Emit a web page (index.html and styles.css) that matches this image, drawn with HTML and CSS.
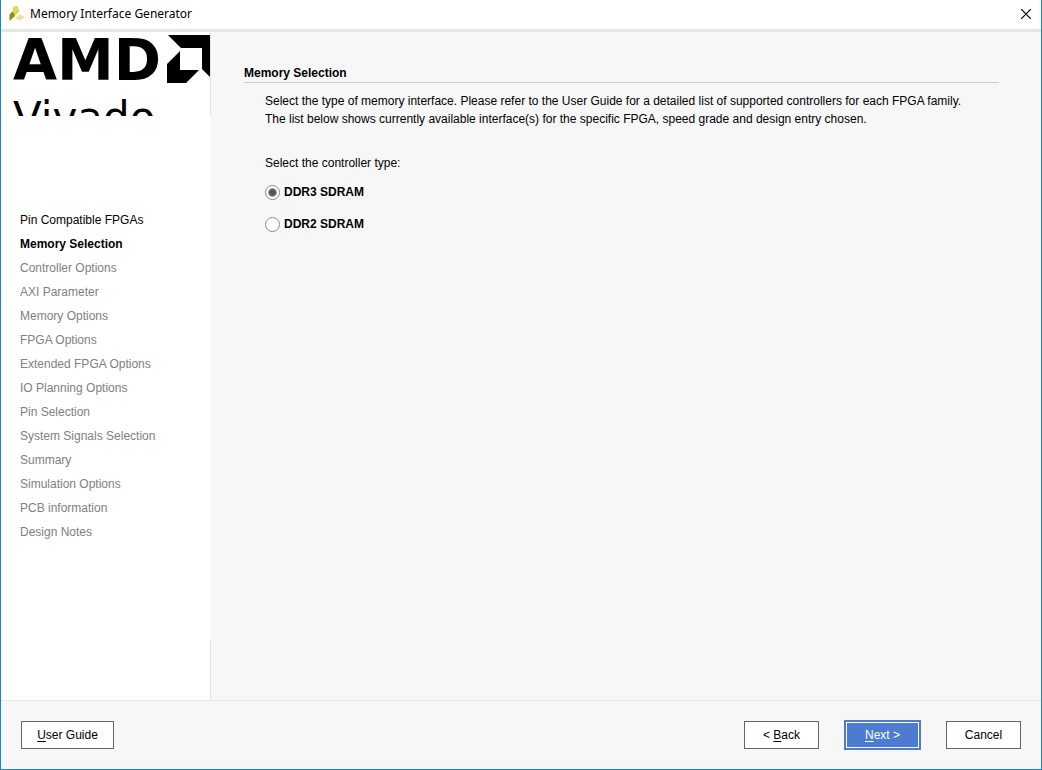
FILE: index.html
```html
<!DOCTYPE html>
<html lang="en">
<head>
    <meta charset="UTF-8">
    <meta name="viewport" content="width=device-width, initial-scale=1.0">
    <title>Memory Interface Generator</title>
    <link rel="stylesheet" href="styles.css">
</head>
<body>
    <div class="window">
        <header class="titlebar">
            <svg class="app-icon" width="16" height="16" viewBox="0 0 16 16" aria-hidden="true">
                <path d="M4 0.5 L8.5 0 L10.5 5.5 L6 9.5 L4 5 Z" fill="#dcdc50"/>
                <path d="M0.5 8.5 L4 5 L6 10 L0.5 15 Z" fill="#8f8f14"/>
                <path d="M6 12 L11 8.5 L16 11 L11 14.5 Z" fill="#e6e696"/>
            </svg>
            <span class="title">Memory Interface Generator</span>
            <button type="button" class="close" aria-label="Close">
                <svg width="10" height="10" viewBox="0 0 10 10">
                    <path d="M0 0 L10 10 M10 0 L0 10" stroke="#000" stroke-width="1.2"/>
                </svg>
            </button>
        </header>

        <div class="content">
            <aside class="sidebar">
                <div class="logo">
                    <div class="brand">
                        <span class="brand-name">AMD</span>
                        <svg width="43" height="48" viewBox="0 0 43 48" aria-hidden="true">
                            <path d="M1 0 H43 V42 L35 34 V13 H14 Z"/>
                            <path d="M0 29 L13 16 V35 H32 L19 48 H0 Z"/>
                        </svg>
                    </div>
                    <div class="product">Vivado</div>
                </div>
                <nav>
                    <ul class="steps">
                        <li class="done">Pin Compatible FPGAs</li>
                        <li class="current">Memory Selection</li>
                        <li>Controller Options</li>
                        <li>AXI Parameter</li>
                        <li>Memory Options</li>
                        <li>FPGA Options</li>
                        <li>Extended FPGA Options</li>
                        <li>IO Planning Options</li>
                        <li>Pin Selection</li>
                        <li>System Signals Selection</li>
                        <li>Summary</li>
                        <li>Simulation Options</li>
                        <li>PCB information</li>
                        <li>Design Notes</li>
                    </ul>
                </nav>
                <div class="sidebar-end"></div>
            </aside>

            <main class="page">
                <h1>Memory Selection</h1>
                <div class="page-body">
                    <p>Select the type of memory interface. Please refer to the User Guide for a detailed list of supported controllers for each FPGA family.<br>
                    The list below shows currently available interface(s) for the specific FPGA, speed grade and design entry chosen.</p>
                    <fieldset>
                        <legend>Select the controller type:</legend>
                        <label><input type="radio" name="controller" value="ddr3" checked>DDR3 SDRAM</label>
                        <label><input type="radio" name="controller" value="ddr2">DDR2 SDRAM</label>
                    </fieldset>
                </div>
            </main>
        </div>

        <footer class="buttons">
            <button type="button" class="btn guide"><u>U</u>ser Guide</button>
            <button type="button" class="btn">&lt; <u>B</u>ack</button>
            <button type="button" class="btn next"><u>N</u>ext &gt;</button>
            <button type="button" class="btn">Cancel</button>
        </footer>
    </div>
</body>
</html>
```

FILE: styles.css
```css
* {
    box-sizing: border-box;
}
body {
    margin: 0;
    font-family: "Liberation Sans", Arial, sans-serif;
    font-size: 12px;
    line-height: 18px;
    color: #000;
}
.window {
    display: flex;
    flex-direction: column;
    min-height: 100vh;
    border: 1px solid #1c82d4;
    border-top: 0;
    background: #f7f7f7;
}

/* title bar */
.titlebar {
    display: flex;
    align-items: center;
    gap: 5px;
    height: 32px;
    padding: 0 10px 2px 8px;
    background: #fff;
    border-bottom: 3px solid #e6e6e6;
}
.title {
    flex: 1;
    font-family: "Noto Sans", sans-serif;
    font-size: 12px;
}
.close {
    display: flex;
    padding: 0;
    border: 0;
    background: none;
}

/* left column */
.content {
    display: flex;
    flex: 1;
}
.sidebar {
    display: flex;
    flex-direction: column;
    width: 210px;
    background: #fff;
}
.logo {
    height: 84px;
    padding: 3px 0 0 12px;
    border-right: 1px solid #e6e6e6;
    overflow: hidden;
}
.brand {
    display: flex;
    justify-content: space-between;
    height: 48px;
}
.brand-name {
    font-family: "DejaVu Sans", sans-serif;
    font-size: 57px;
    font-weight: bold;
    line-height: 50px;
}
/* only the top of the product name shows */
.product {
    margin-top: 11px;
    font-family: "DejaVu Sans", sans-serif;
    font-size: 42px;
    line-height: 48px;
}
nav {
    flex: 1;
}
.steps {
    margin: 0;
    padding: 92px 0 0 19px;
    list-style: none;
    line-height: 24px;
    color: #808080;
}
.done {
    color: #000;
}
.current {
    color: #000;
    font-weight: bold;
}
.sidebar-end {
    height: 60px;
    border-right: 1px solid #e6e6e6;
}

/* wizard page */
.page {
    flex: 1;
    padding: 32px 42px 0 33px;
}
h1 {
    margin: 0;
    font-size: 12px;
    border-bottom: 1px solid #ccc;
}
.page-body {
    padding: 9px 0 0 21px;
}
p {
    margin: 0;
}
fieldset {
    margin: 26px 0 0;
    padding: 0;
    border: 0;
}
legend {
    padding: 0;
    margin-bottom: 12px;
}
label {
    display: flex;
    align-items: center;
    gap: 4px;
    height: 16px;
    margin-bottom: 16px;
    font-weight: bold;
}
input {
    appearance: none;
    width: 15px;
    height: 15px;
    margin: 0;
    border: 1px solid #8a8a8a;
    border-radius: 50%;
    background: #fff;
}
input:checked {
    background: radial-gradient(circle, #555 3px, #fff 5px);
}

/* bottom bar */
.buttons {
    display: flex;
    align-items: center;
    gap: 25px;
    height: 69px;
    padding: 0 20px;
    border-top: 1px solid #e6e6e6;
}
.btn {
    width: 75px;
    height: 28px;
    padding: 0;
    border: 1px solid #666;
    background: #fff;
    color: #000;
    font-family: inherit;
    font-size: 12px;
}
.guide {
    width: 93px;
    margin-right: auto;
}
.next {
    width: 77px;
    height: 30px;
    border: 2px solid #4d7bd1;
    background: #4d7bd1;
    box-shadow: inset 0 0 0 1px #fff;
    color: #fff;
}
u {
    text-underline-offset: 2px;
}
```
